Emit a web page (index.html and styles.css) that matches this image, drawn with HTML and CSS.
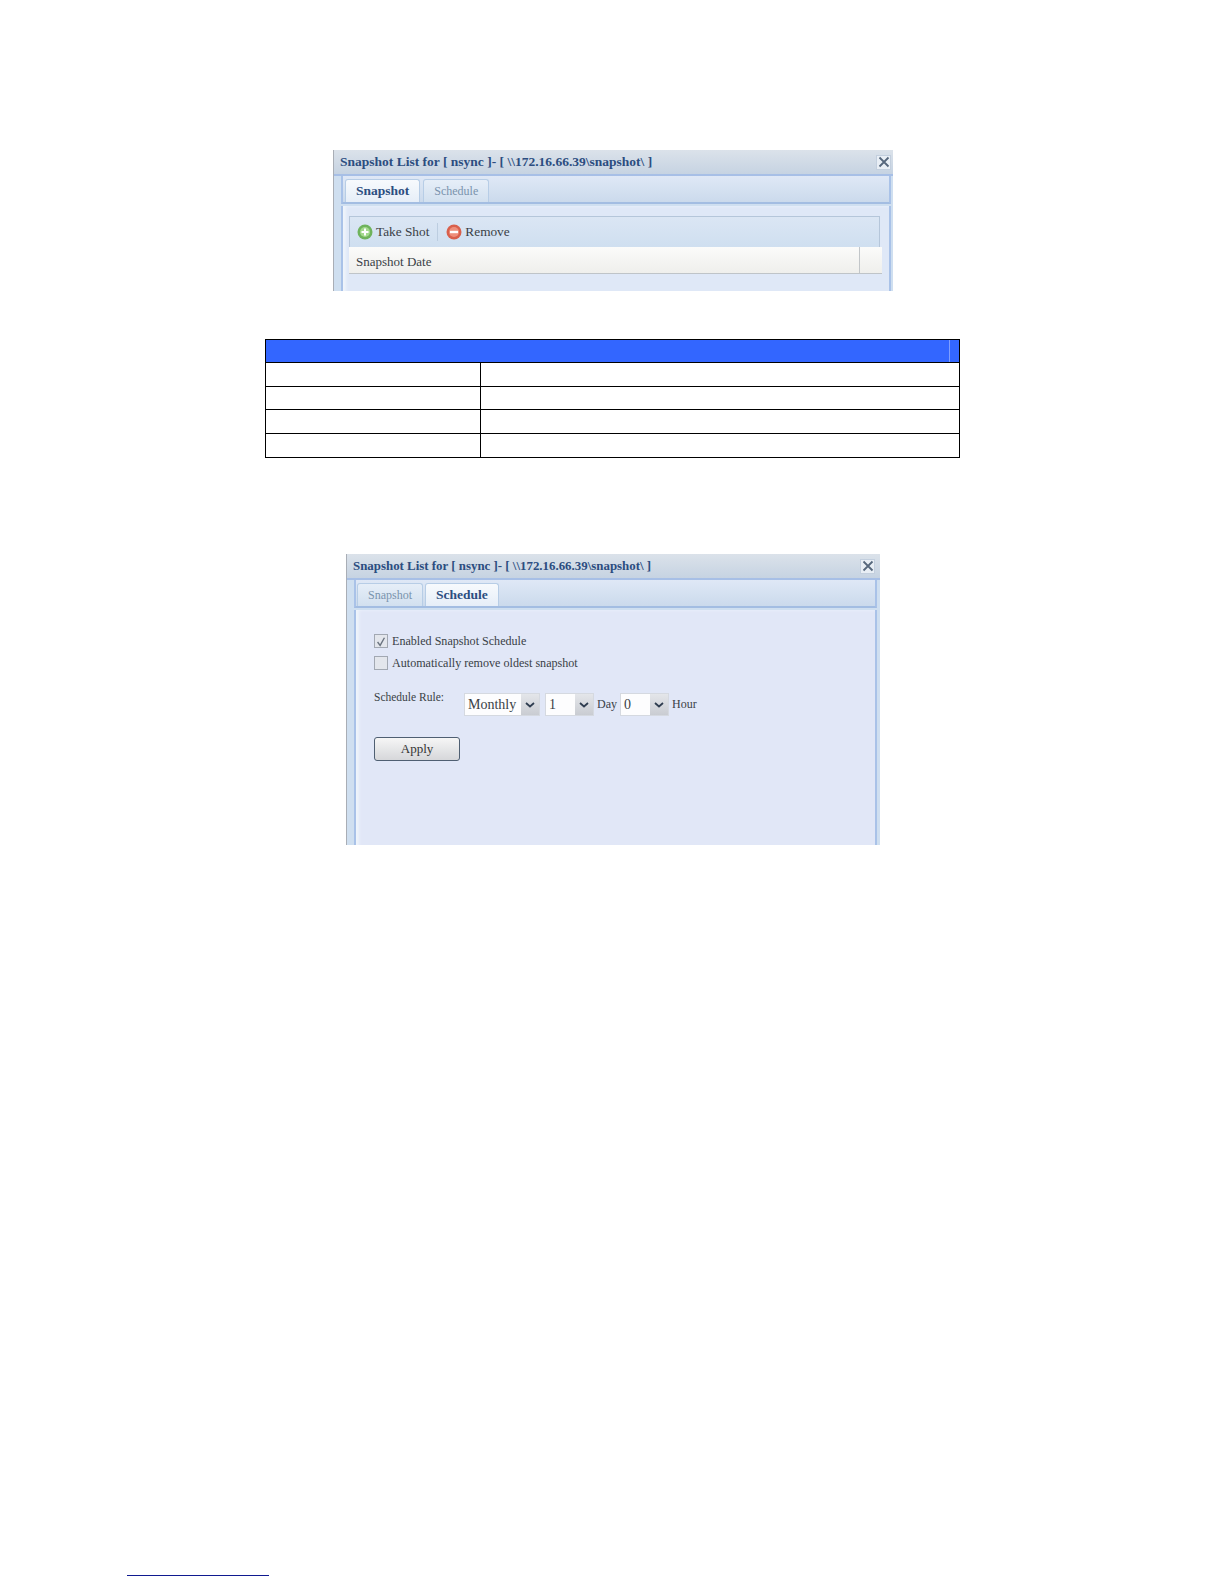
FILE: index.html
```html
<!DOCTYPE html>
<html lang="en">
<head>
    <meta charset="UTF-8">
    <title>Snapshot List</title>
    <link rel="stylesheet" href="styles.css">
</head>
<body>
    <div class="window window-first">
        <div class="win-title">
            <span>Snapshot List for [ nsync ]- [ \\172.16.66.39\snapshot\ ]</span>
            <span class="win-close">
                <svg viewBox="0 0 12 12" width="12" height="12"><path d="M1.5 1.5L10.5 10.5M10.5 1.5L1.5 10.5" stroke="#56677c" stroke-width="1.8" fill="none"/></svg>
            </span>
        </div>
        <div class="tab-strip">
            <span class="tab tab-active">Snapshot</span>
            <span class="tab">Schedule</span>
        </div>
        <div class="win-body">
            <div class="toolbar">
                <span class="tool">
                    <svg viewBox="0 0 16 16" width="16" height="16"><circle cx="8" cy="8" r="7.5" fill="#6fb35c"/><circle cx="8" cy="8" r="5" fill="#a4d98e"/><path d="M8 4.5v7M4.5 8h7" stroke="#fff" stroke-width="2"/></svg>
                    Take Shot
                </span>
                <span class="tool-sep"></span>
                <span class="tool">
                    <svg viewBox="0 0 16 16" width="16" height="16"><circle cx="8" cy="8" r="7.5" fill="#d9604c"/><circle cx="8" cy="8" r="5" fill="#ee8f7c"/><path d="M4 8h8" stroke="#fff" stroke-width="2.4"/></svg>
                    Remove
                </span>
            </div>
            <div class="grid-head">
                <span class="grid-col">Snapshot Date</span>
                <span class="grid-end"></span>
            </div>
        </div>
    </div>

    <table class="info-table">
        <colgroup><col class="col-a"><col></colgroup>
        <tr><th colspan="2"><span class="th-mark"></span></th></tr>
        <tr class="row-tall"><td></td><td></td></tr>
        <tr><td></td><td></td></tr>
        <tr class="row-tall"><td></td><td></td></tr>
        <tr class="row-tall"><td></td><td></td></tr>
    </table>

    <div class="window window-second">
        <div class="win-title">
            <span>Snapshot List for [ nsync ]- [ \\172.16.66.39\snapshot\ ]</span>
            <span class="win-close">
                <svg viewBox="0 0 12 12" width="12" height="12"><path d="M1.5 1.5L10.5 10.5M10.5 1.5L1.5 10.5" stroke="#56677c" stroke-width="1.8" fill="none"/></svg>
            </span>
        </div>
        <div class="tab-strip">
            <span class="tab">Snapshot</span>
            <span class="tab tab-active">Schedule</span>
        </div>
        <div class="win-body form-body">
            <div class="check-row">
                <span class="check">
                    <svg viewBox="0 0 14 14" width="14" height="14"><path d="M3 7l3 4 5-9" stroke="#6b7480" stroke-width="1.6" fill="none"/></svg>
                </span>
                Enabled Snapshot Schedule
            </div>
            <div class="check-row">
                <span class="check"></span>
                Automatically remove oldest snapshot
            </div>
            <div class="rule-row">
                <span class="rule-label">Schedule Rule:</span>
                <span class="combo combo-month"><span class="combo-text">Monthly</span><span class="combo-btn"><svg viewBox="0 0 10 6" width="10" height="6"><path d="M1 1l4 3.5L9 1" stroke="#2f3d50" stroke-width="1.8" fill="none"/></svg></span></span>
                <span class="combo combo-num"><span class="combo-text">1</span><span class="combo-btn"><svg viewBox="0 0 10 6" width="10" height="6"><path d="M1 1l4 3.5L9 1" stroke="#2f3d50" stroke-width="1.8" fill="none"/></svg></span></span>
                <span class="rule-word">Day</span>
                <span class="combo combo-num"><span class="combo-text">0</span><span class="combo-btn"><svg viewBox="0 0 10 6" width="10" height="6"><path d="M1 1l4 3.5L9 1" stroke="#2f3d50" stroke-width="1.8" fill="none"/></svg></span></span>
                <span class="rule-word">Hour</span>
            </div>
            <button class="apply-btn">Apply</button>
        </div>
    </div>

    <div class="foot-rule"></div>
</body>
</html>
```
FILE: styles.css
```css
body {
    margin: 0;
    height: 1584px;
    overflow: hidden;
    background-color: #fff;
    font-family: "Liberation Serif", serif;
    color: #333;
    position: relative;
}

.window {
    box-sizing: border-box;
    background-color: #cfdff0;
    border-left: 1px solid #a9aeb6;
    overflow: hidden;
}
.window-first {
    width: 560px;
    height: 141px;
    margin: 150px 0 0 333px;
}
.window-second {
    width: 534px;
    height: 291px;
    margin: 96px 0 0 346px;
}

.win-title {
    display: flex;
    justify-content: space-between;
    align-items: center;
    height: 24px;
    padding: 0 2px 0 6px;
    background: linear-gradient(#dbe2ea, #c6d3e2);
    color: #2c4d80;
    font-size: 13.5px;
    font-weight: bold;
    border-bottom: 2px solid #a7bfe6;
}
.window-second .win-title {
    padding-right: 5px;
    font-size: 12.9px;
}
.win-close {
    display: flex;
    align-items: center;
    justify-content: center;
    width: 13px;
    height: 13px;
    background-color: #e8eef5;
    border: 1px solid #c3cfde;
}

.tab-strip {
    display: flex;
    gap: 3px;
    height: 28px;
    padding: 3px 0 0 2px;
    box-sizing: border-box;
    margin: 0 2px 0 7px;
    background: linear-gradient(#dfe8f6, #cbdaec);
    border-left: 2px solid #a9c2e8;
    border-right: 2px solid #a9c2e8;
    border-bottom: 2px solid #a3bde2;
}
.window-second .tab-strip {
    margin-right: 3px;
    padding-left: 1px;
    gap: 2px;
}
.tab {
    display: flex;
    align-items: center;
    padding: 0 10px;
    font-size: 12px;
    color: #7a93ad;
    background: linear-gradient(#e6eef8, #d2e0ef);
    border: 1px solid #b7cde6;
    border-bottom: none;
    border-radius: 3px 3px 0 0;
}
.tab-active {
    color: #2c4d80;
    font-size: 13.5px;
    font-weight: bold;
    background: linear-gradient(#f7fafd, #e6eef8);
}

.win-body {
    margin: 2px 2px 0 7px;
    height: 200px;
    padding: 10px 9px 0 6px;
    border-left: 2px solid #a9c2e8;
    border-right: 2px solid #a9c2e8;
    background-color: #dfe8f7;
    box-shadow: inset 3px 0 3px #eff4fb;
}
.toolbar {
    display: flex;
    align-items: center;
    height: 30px;
    padding-left: 7px;
    gap: 8px;
    background: linear-gradient(#dbe6f4, #cfdff0);
    border: 1px solid #b5c6da;
    border-bottom: none;
}
.tool {
    display: flex;
    align-items: center;
    gap: 3px;
    font-size: 13.3px;
    color: #3a3f46;
}
.tool-sep {
    width: 1px;
    height: 18px;
    background-color: #bccde0;
}
.grid-head {
    display: flex;
    justify-content: space-between;
    height: 26px;
    margin-right: -2px;
    padding-left: 7px;
    background: linear-gradient(#fbfbfa, #efefec);
    border-bottom: 1px solid #bfc4c8;
    font-size: 13px;
    line-height: 30px;
    color: #3a3f46;
}
.grid-end {
    width: 22px;
    border-left: 1px solid #c2c6c9;
}

.info-table {
    width: 695px;
    margin: 48px 0 0 265px;
    border-collapse: collapse;
    table-layout: fixed;
}
.col-a {
    width: 215px;
}
.info-table th {
    height: 22px;
    padding: 0;
    background-color: #3366ff;
    border: 1px solid #000;
    text-align: right;
}
.th-mark {
    display: block;
    width: 10px;
    height: 22px;
    margin-left: auto;
    border-left: 1px solid #7f9fff;
    box-sizing: border-box;
}
.info-table td {
    height: 22px;
    padding: 0;
    border: 1px solid #000;
}
.info-table .row-tall td {
    height: 23px;
}

.form-body {
    height: 240px;
    margin-right: 3px;
    padding: 20px 0 0 18px;
    background-color: #e1e7f7;
}
.check-row {
    display: flex;
    align-items: center;
    gap: 4px;
    height: 22px;
    font-size: 12.1px;
    color: #3a3f46;
}
.check {
    display: flex;
    box-sizing: border-box;
    width: 14px;
    height: 14px;
    background-color: #e3e6ec;
    border: 1px solid #a2a8b2;
}
.rule-row {
    display: flex;
    align-items: center;
    gap: 3px;
    margin-top: 19px;
    font-size: 12px;
    color: #3a3f46;
}
.rule-label {
    align-self: flex-start;
    width: 87px;
    margin-top: -2px;
    font-size: 11.5px;
}
.combo {
    display: flex;
    height: 23px;
    background-color: #fdfdfe;
    border: 1px solid #d5d9e0;
    box-sizing: border-box;
}
.combo-month {
    width: 76px;
    margin-right: 2px;
}
.combo-num {
    width: 49px;
}
.combo-text {
    flex: 1;
    padding-left: 3px;
    font-size: 14px;
    line-height: 21px;
}
.combo-btn {
    display: flex;
    align-items: center;
    justify-content: center;
    width: 18px;
    background: linear-gradient(#e4e6ea, #c9ccd2);
}
.rule-word {
    font-size: 12px;
}
.apply-btn {
    display: block;
    width: 86px;
    height: 24px;
    margin-top: 21px;
    padding: 0;
    font-family: "Liberation Serif", serif;
    font-size: 13px;
    color: #333;
    background: linear-gradient(#f6f6f6, #d6d7da);
    border: 1px solid #4f5f72;
    border-radius: 3px;
}

.foot-rule {
    position: absolute;
    left: 127px;
    top: 1575px;
    width: 142px;
    height: 1px;
    background-color: #101a90;
}
```
